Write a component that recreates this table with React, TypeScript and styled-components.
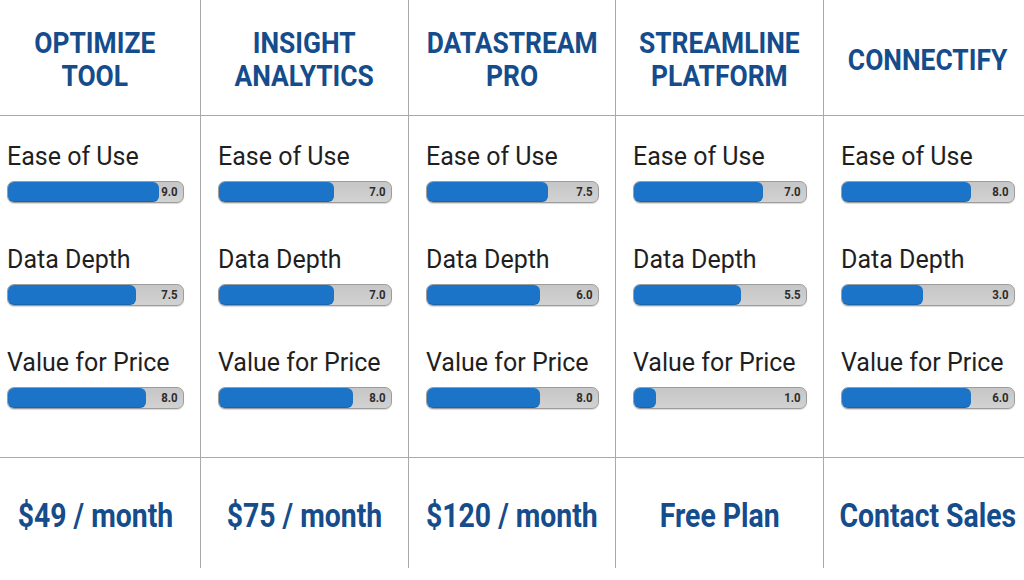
import React from "react";
import styled, { createGlobalStyle } from "styled-components";

const GlobalStyle = createGlobalStyle`
  html, body {
    margin: 0;
    padding: 0;
    background: #ffffff;
  }
  body {
    font-family: Roboto, "Liberation Sans", sans-serif;
  }
`;

type Metric = { label: string; value: string; fill: number };
type Plan = { name: string[]; price: string; width: number; metrics: Metric[] };

// first and last columns run past the edges of the view
const plans: Plan[] = [
  {
    name: ["OPTIMIZE", "TOOL"],
    price: "$49 / month",
    width: 211,
    metrics: [
      { label: "Ease of Use", value: "9.0", fill: 86 },
      { label: "Data Depth", value: "7.5", fill: 73 },
      { label: "Value for Price", value: "8.0", fill: 79 },
    ],
  },
  {
    name: ["INSIGHT", "ANALYTICS"],
    price: "$75 / month",
    width: 208,
    metrics: [
      { label: "Ease of Use", value: "7.0", fill: 67 },
      { label: "Data Depth", value: "7.0", fill: 67 },
      { label: "Value for Price", value: "8.0", fill: 78 },
    ],
  },
  {
    name: ["DATASTREAM", "PRO"],
    price: "$120 / month",
    width: 207,
    metrics: [
      { label: "Ease of Use", value: "7.5", fill: 71 },
      { label: "Data Depth", value: "6.0", fill: 66 },
      { label: "Value for Price", value: "8.0", fill: 66 },
    ],
  },
  {
    name: ["STREAMLINE", "PLATFORM"],
    price: "Free Plan",
    width: 208,
    metrics: [
      { label: "Ease of Use", value: "7.0", fill: 75 },
      { label: "Data Depth", value: "5.5", fill: 62 },
      { label: "Value for Price", value: "1.0", fill: 13 },
    ],
  },
  {
    name: ["CONNECTIFY"],
    price: "Contact Sales",
    width: 207,
    metrics: [
      { label: "Ease of Use", value: "8.0", fill: 75 },
      { label: "Data Depth", value: "3.0", fill: 47 },
      { label: "Value for Price", value: "6.0", fill: 75 },
    ],
  },
];

const Page = styled.div`
  width: 1024px;
  height: 580px;
  overflow: hidden;
  background: #fff;
`;

const Table = styled.div`
  display: flex;
  height: 568px;
  margin-left: -10px;
`;

const Column = styled.div<{ $w: number; $last: boolean }>`
  width: ${(p) => p.$w}px;
  flex: none;
  display: grid;
  grid-template-rows: 116px 342px 1fr;
  box-sizing: border-box;
  border-right: ${(p) => (p.$last ? "none" : "1.5px solid #a9a9a9")};
`;

const HeaderCell = styled.div`
  display: flex;
  align-items: center;
  justify-content: center;
  text-align: center;
  border-bottom: 1.5px solid #a9a9a9;
  box-sizing: border-box;
  padding-top: 3px;
`;

// condensed look: the reference uses a narrow bold face
const PlanName = styled.h2`
  margin: 0;
  font-family: Roboto, "Liberation Sans", sans-serif;
  font-weight: 700;
  font-size: 30px;
  line-height: 33px;
  color: #154c8b;
  white-space: nowrap;
  transform: scaleX(0.88);
`;

const Body = styled.div`
  display: flex;
  flex-direction: column;
  gap: 42px;
  padding: 26px 16px 0 17px;
  border-bottom: 1.5px solid #a9a9a9;
  box-sizing: border-box;
`;

const Metric = styled.div`
  display: flex;
  flex-direction: column;
  gap: 9px;
`;

const Label = styled.div`
  font-size: 25px;
  line-height: 30px;
  color: #1f1f1f;
  white-space: nowrap;
`;

const Track = styled.div`
  position: relative;
  height: 22px;
  box-sizing: border-box;
  border: 1px solid #9c9c9c;
  border-radius: 7px;
  background: linear-gradient(#c6c6c6, #d2d2d2);
  box-shadow: 0 1px 1px rgba(0, 0, 0, 0.15);
`;

const Fill = styled.div`
  position: absolute;
  left: 0;
  top: 0;
  bottom: 0;
  border-radius: 6px;
  background: #1c74c8;
  box-shadow: inset 0 -1px 0 rgba(0, 0, 0, 0.12);
`;

const Score = styled.span`
  position: absolute;
  right: 5px;
  top: 0;
  line-height: 20px;
  font-size: 13px;
  font-weight: 700;
  color: #2d2d2d;
  transform: scaleX(0.88);
  transform-origin: right center;
`;

const Footer = styled.div`
  display: flex;
  align-items: center;
  justify-content: center;
  padding-top: 4px;
`;

const Price = styled.div`
  font-weight: 700;
  font-size: 33px;
  color: #154c8b;
  white-space: nowrap;
  transform: scaleX(0.86);
`;

export default function App() {
  return (
    <Page>
      <GlobalStyle />
      <Table>
        {plans.map((plan, i) => (
          <Column key={plan.price} $w={plan.width} $last={i === plans.length - 1}>
            <HeaderCell>
              <PlanName>
                {plan.name.map((line) => (
                  <div key={line}>{line}</div>
                ))}
              </PlanName>
            </HeaderCell>
            <Body>
              {plan.metrics.map((m) => (
                <Metric key={m.label}>
                  <Label>{m.label}</Label>
                  <Track>
                    <Fill style={{ width: `${m.fill}%` }} />
                    <Score>{m.value}</Score>
                  </Track>
                </Metric>
              ))}
            </Body>
            <Footer>
              <Price>{plan.price}</Price>
            </Footer>
          </Column>
        ))}
      </Table>
    </Page>
  );
}
